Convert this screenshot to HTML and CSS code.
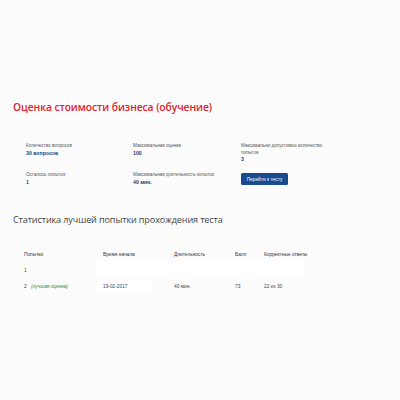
FILE: index.html
```html
<!DOCTYPE html>
<html lang="ru">
<head>
<meta charset="utf-8">
<link rel="stylesheet" href="styles.css">
</head>
<body>
<div class="page">
  <h1 class="title">Оценка стоимости бизнеса (обучение)</h1>
  <div class="info">
    <div class="cell">
      <div class="label">Количество вопросов</div>
      <div class="value">30 вопросов</div>
    </div>
    <div class="cell">
      <div class="label">Максимальная оценка</div>
      <div class="value">100</div>
    </div>
    <div class="cell">
      <div class="label">Максимально допустимое количество<br>попыток</div>
      <div class="value">3</div>
    </div>
    <div class="cell">
      <div class="label">Осталось попыток</div>
      <div class="value">1</div>
    </div>
    <div class="cell">
      <div class="label">Максимальная длительность попыток</div>
      <div class="value">40 мин.</div>
    </div>
    <div class="cell">
      <button class="btn">Перейти к тесту</button>
    </div>
  </div>
  <h2 class="subtitle">Статистика лучшей попытки прохождения теста</h2>
  <div class="table">
    <div class="row head">
      <div class="c c1">Попытки</div>
      <div class="c c2">Время начала</div>
      <div class="c c3">Длительность</div>
      <div class="c c4">Балл</div>
      <div class="c c5">Корректные ответы</div>
    </div>
    <div class="row r1">
      <div class="c c1">1</div>
      <div class="c c2 blank"></div>
      <div class="c c3 blank"></div>
      <div class="c c4 blank"></div>
      <div class="c c5 blank"></div>
    </div>
    <div class="row">
      <div class="c c1">2 <span class="best">(лучшая оценка)</span></div>
      <div class="c c2"><span class="datebox">19-02-2017</span></div>
      <div class="c c3">40 мин.</div>
      <div class="c c4">73</div>
      <div class="c c5">22 из 30</div>
    </div>
  </div>
</div>
</body>
</html>
```

FILE: styles.css
```css
html, body {
  margin: 0;
  padding: 0;
  background: #fcfcfc;
}
.page {
  width: 400px;
  height: 400px;
  box-sizing: border-box;
  padding: 98px 0 0 13px;
  font-family: "Liberation Sans", Arial, sans-serif;
}
.title {
  margin: 0;
  font-family: "Open Sans", "Noto Sans", sans-serif;
  font-weight: 600;
  font-size: 10.25px;
  line-height: 18px;
  color: #e3202a;
  letter-spacing: -0.05px;
}
.info {
  display: grid;
  grid-template-columns: 107px 108px 120px;
  row-gap: 9px;
  margin: 27px 0 0 13px;
}
.cell {
  min-height: 20px;
}
.label {
  font-size: 4.6px;
  line-height: 6.5px;
  color: #555;
}
.value {
  font-size: 5.2px;
  line-height: 6.5px;
  font-weight: bold;
  color: #1c3f77;
}
.btn {
  display: block;
  margin: 1px 0 0 0;
  width: 47px;
  height: 12px;
  padding: 0;
  border: none;
  border-radius: 1.5px;
  background: #1a4a8e;
  color: #fff;
  font-family: "Liberation Sans", Arial, sans-serif;
  font-size: 4.8px;
}
.subtitle {
  margin: 20px 0 0 0;
  font-family: "Open Sans", "Noto Sans", sans-serif;
  font-weight: 400;
  font-size: 9.05px;
  line-height: 16px;
  color: #444;
  letter-spacing: -0.1px;
}
.table {
  margin: 18px 0 0 11px;
}
.row {
  display: flex;
  height: 16px;
  align-items: center;
  font-size: 4.8px;
  color: #444;
}
.row.head {
  color: #333;
}
.c1 { width: 79px; }
.c2 { width: 71px; }
.c3 { width: 61px; }
.c4 { width: 29px; }
.c5 { width: 60px; white-space: nowrap; }
.r1 .c2 { margin-left: -6px; width: 77px; }
.r1 .blank {
  background: #fff;
  align-self: stretch;
}
.r1 .c5 { width: 40px; }
.datebox {
  display: inline-block;
  background: #fff;
  margin-left: -6px;
  padding: 4px 0 4px 6px;
  width: 49px;
}
.best {
  color: #2f8a2f;
  font-style: italic;
  margin-left: 3px;
}
```
